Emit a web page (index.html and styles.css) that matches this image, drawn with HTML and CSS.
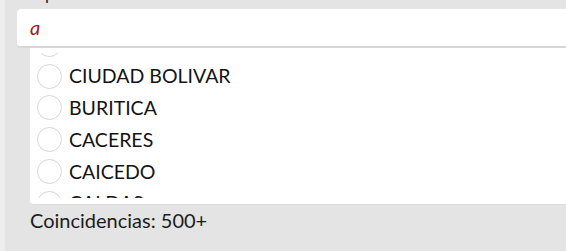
FILE: index.html
```html
<!DOCTYPE html>
<html lang="es">
<head>
<meta charset="utf-8">
<title>Municipios</title>
<link rel="stylesheet" href="styles.css">
</head>
<body>
<div class="panel">
  <div class="label">Grupo</div>
  <div class="search">
    <span class="query">a</span>
  </div>
  <div class="list">
    <div class="viewport">
      <ul class="items">
        <li class="item"><span class="radio"></span><span class="name">ABEJORRAL</span></li>
        <li class="item"><span class="radio"></span><span class="name">CIUDAD BOLIVAR</span></li>
        <li class="item"><span class="radio"></span><span class="name">BURITICA</span></li>
        <li class="item"><span class="radio"></span><span class="name">CACERES</span></li>
        <li class="item"><span class="radio"></span><span class="name">CAICEDO</span></li>
        <li class="item"><span class="radio"></span><span class="name">CALDAS</span></li>
      </ul>
    </div>
  </div>
  <div class="count">Coincidencias: 500+</div>
</div>
</body>
</html>
```
FILE: styles.css
```css
html, body {
  margin: 0;
  padding: 0;
  height: 100%;
  overflow: hidden;
}
body {
  background: #ededed;
  font-family: Lato, "Open Sans", sans-serif;
  color: #1c1c1c;
}
.panel {
  margin-left: 5px;
  height: 251px;
  background: #e3e4e3;
  padding-left: 12px;
  overflow: hidden;
}
.label {
  font-size: 17px;
  line-height: 20px;
  height: 20px;
  margin-top: -16px;
}
.search {
  margin-top: 5px;
  height: 37px;
  width: 600px;
  background: #fff;
  border-radius: 4px;
  border-bottom: 2px solid #d7d7d7;
  box-sizing: content-box;
  display: flex;
  align-items: center;
  padding-left: 13px;
}
.query {
  font-size: 20px;
  font-style: italic;
  color: #b0141c;
  line-height: 1;
  margin-top: -1px;
}
.list {
  margin-left: 13px;
  width: 600px;
  height: 146px;
  padding: 5px 0;
  background: #fff;
  border-bottom: 1px solid #dcdcdc;
  border-bottom-left-radius: 4px;
}
.viewport {
  height: 145px;
  overflow: hidden;
}
.items {
  list-style: none;
  margin: -24.6px 0 0 0;
  padding: 0 0 0 7px;
}
.item {
  height: 31.75px;
  display: flex;
  align-items: center;
  gap: 7px;
}
.radio {
  width: 23px;
  height: 23px;
  border: 1px solid #d6d6d6;
  border-radius: 50%;
  flex: none;
  background: #fff;
}
.name {
  font-size: 19.5px;
  line-height: 1;
  color: #141414;
}
.count {
  margin-left: 13px;
  margin-top: 3px;
  font-size: 20px;
  line-height: 24px;
  color: #1c1c1c;
}
```
